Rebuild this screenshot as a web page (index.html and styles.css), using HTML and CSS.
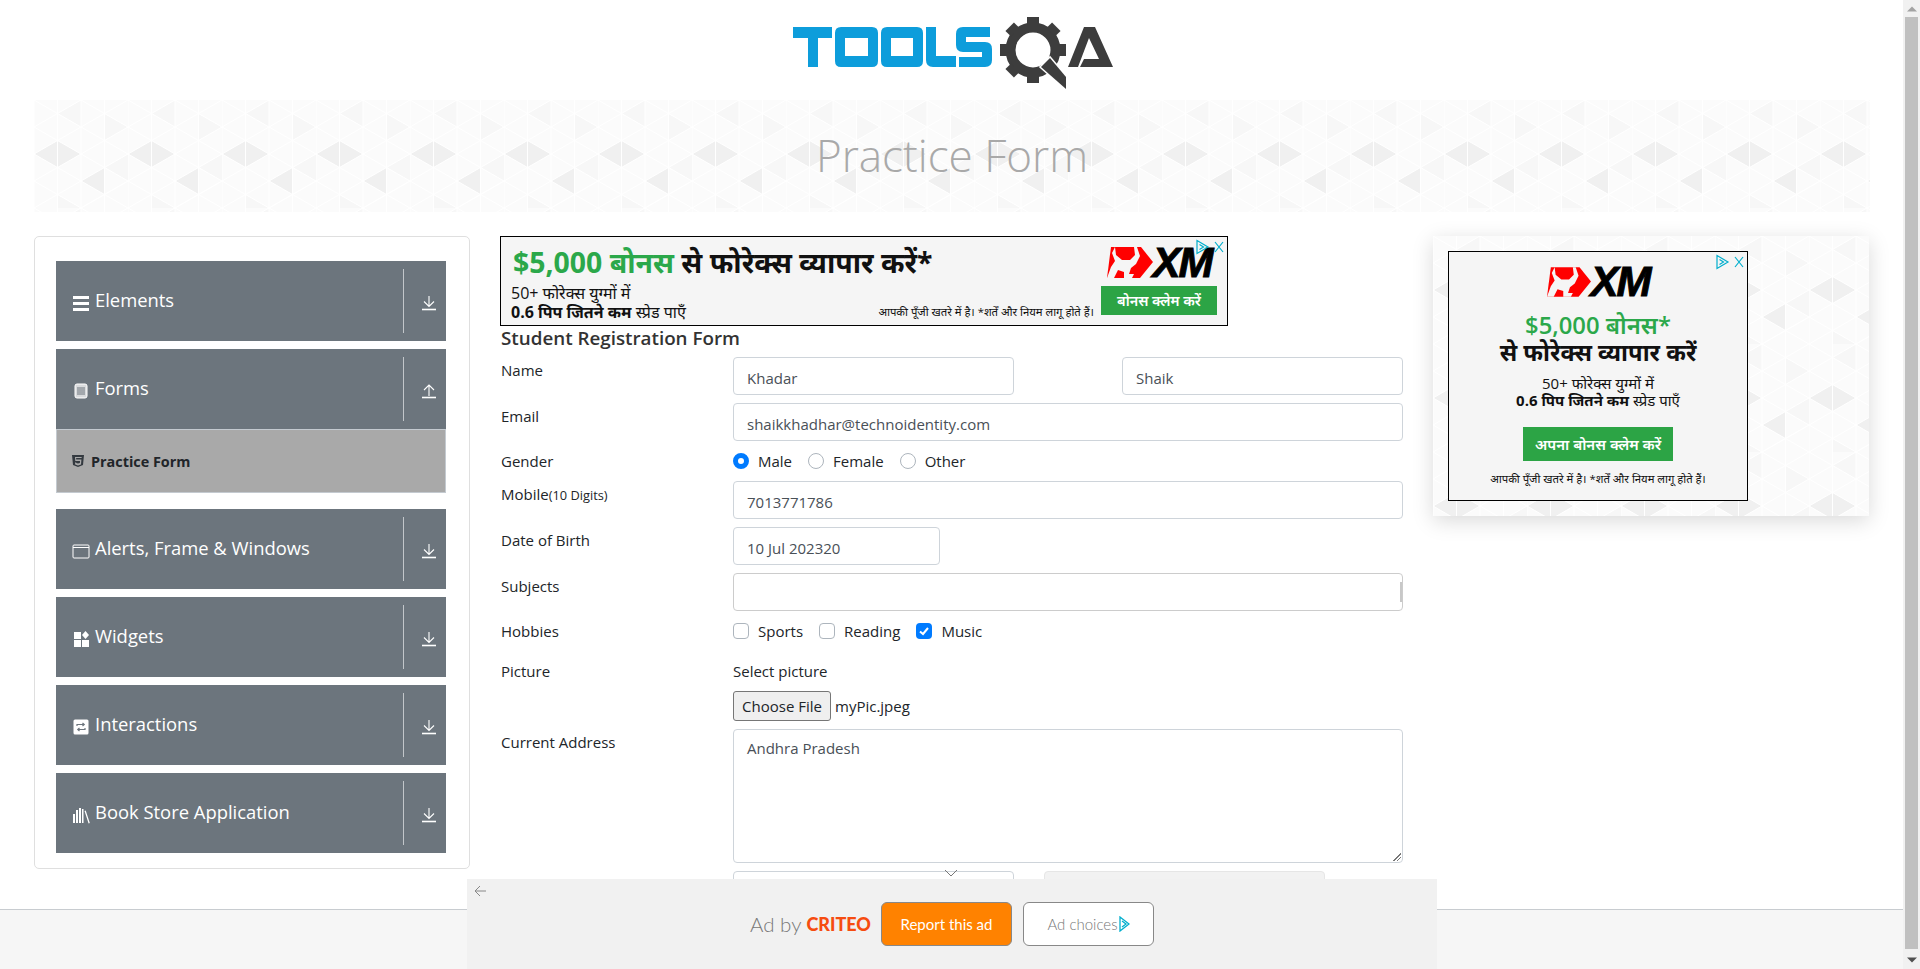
FILE: index.html
```html
<!DOCTYPE html>
<html>
<head>
    <meta charset="utf-8">
    <title>ToolsQA</title>
    <link rel="stylesheet" href="styles.css">
</head>
<body>
    <div class="page">
        <header class="logo-bar">
            <svg class="logo" viewBox="0 0 320 74" width="320" height="74">
                <g fill="#0d9ddb">
                    <path d="M0 10H39V21H25V50H15V21H0z"/>
                    <path fill-rule="evenodd" d="M48 10H79Q85 10 85 16V44Q85 50 79 50H48Q42 50 42 44V16Q42 10 48 10zM52 21V39H75V21z"/>
                    <path fill-rule="evenodd" d="M94 10H124Q130 10 130 16V44Q130 50 124 50H94Q88 50 88 44V16Q88 10 94 10zM98 21V39H120V21z"/>
                    <path d="M133 10H143V39H163V50H140Q133 50 133 43z"/>
                    <path d="M170 10H197V20H173V25H192Q199 25 199 32V43Q199 50 192 50H166V40H189V35H170Q163 35 163 28V17Q163 10 170 10z"/>
                </g>
                <g fill="#3d3d3d">
                    <circle cx="240" cy="33" r="22.500" fill="none" stroke="#3d3d3d" stroke-width="10"/>
                    <path d="M234 0h12v8h-12z"/>
                    <path d="M234 0h12v8h-12z" transform="rotate(45 240 33)"/>
                    <path d="M234 0h12v8h-12z" transform="rotate(90 240 33)"/>
                    <path d="M234 0h12v8h-12z" transform="rotate(180 240 33)"/>
                    <path d="M234 0h12v8h-12z" transform="rotate(225 240 33)"/>
                    <path d="M234 0h12v8h-12z" transform="rotate(270 240 33)"/>
                    <path d="M234 0h12v8h-12z" transform="rotate(315 240 33)"/>
                    <path d="M248 50L257 41L273 60V72z" stroke="#fff" stroke-width="3" paint-order="stroke"/>
                    <path d="M275 50L291 10H302L320 50H287L291 42H306L296 21L285 50z"/>
                </g>
            </svg>
        </header>

        <div class="banner"><h1>Practice Form</h1></div>

        <div class="content">
            <aside class="side-card">
                <div class="menu-item">
                    <svg class="menu-icon" viewBox="0 0 18 18"><path d="M1 2h16v3H1zM1 8h16v3H1zM1 14h16v3H1z" fill="#fff"/></svg>
                    <span class="menu-label">Elements</span>
                    <svg class="menu-arrow" viewBox="0 0 16 16"><path d="M8 1v10M3 6.500l5 5 5-5" fill="none" stroke="#fff" stroke-width="1.100"/><path d="M1 14.500h14" stroke="#fff" stroke-width="1.600"/></svg>
                </div>
                <div class="menu-item">
                    <svg class="menu-icon" viewBox="0 0 18 18"><rect x="3" y="2" width="12" height="14" rx="2" fill="#d9dbdd" stroke="#fff"/><path d="M5 6h8M5 8h8M5 10h8M5 12h8" stroke="#6c757d"/></svg>
                    <span class="menu-label">Forms</span>
                    <svg class="menu-arrow" viewBox="0 0 16 16"><path d="M8 13V2M3 7l5-5 5 5" fill="none" stroke="#fff" stroke-width="1.100"/><path d="M1 14.500h14" stroke="#fff" stroke-width="1.600"/></svg>
                </div>
                <div class="sub-item">
                    <svg class="sub-icon" viewBox="0 0 14 14"><path fill-rule="evenodd" d="M1 1h12l-1 10-5 2-5-2zm3 2l.3 4H9l-.1 2L7 9.600 5.200 9V8.500H4l.2 2L7 11.500l3-1 .4-5H5.200L5.100 4H10.600L10.700 3z" fill="#343a40"/></svg>
                    <span>Practice Form</span>
                </div>
                <div class="menu-item">
                    <svg class="menu-icon" viewBox="0 0 18 18"><rect x="1" y="3" width="16" height="13" rx="1" fill="none" stroke="#fff"/><path d="M1 5.500h16" stroke="#fff"/></svg>
                    <span class="menu-label">Alerts, Frame &amp; Windows</span>
                    <svg class="menu-arrow" viewBox="0 0 16 16"><path d="M8 1v10M3 6.500l5 5 5-5" fill="none" stroke="#fff" stroke-width="1.100"/><path d="M1 14.500h14" stroke="#fff" stroke-width="1.600"/></svg>
                </div>
                <div class="menu-item">
                    <svg class="menu-icon" viewBox="0 0 18 18"><path d="M2 2h7v7H2zM2 10h7v7H2zM10 10h7v7h-7zM13.500 1l3.500 4-3.500 4L10 5z" fill="#fff"/></svg>
                    <span class="menu-label">Widgets</span>
                    <svg class="menu-arrow" viewBox="0 0 16 16"><path d="M8 1v10M3 6.500l5 5 5-5" fill="none" stroke="#fff" stroke-width="1.100"/><path d="M1 14.500h14" stroke="#fff" stroke-width="1.600"/></svg>
                </div>
                <div class="menu-item">
                    <svg class="menu-icon" viewBox="0 0 18 18"><rect x="1.500" y="1.500" width="15" height="15" rx="1.500" fill="#fff"/><path d="M5 8V6.500h7M10.500 5l1.700 1.500L10.500 8M13 10v1.500H6M7.500 13L5.800 11.500 7.500 10" fill="none" stroke="#6c757d" stroke-width="1.200"/></svg>
                    <span class="menu-label">Interactions</span>
                    <svg class="menu-arrow" viewBox="0 0 16 16"><path d="M8 1v10M3 6.500l5 5 5-5" fill="none" stroke="#fff" stroke-width="1.100"/><path d="M1 14.500h14" stroke="#fff" stroke-width="1.600"/></svg>
                </div>
                <div class="menu-item">
                    <svg class="menu-icon" viewBox="0 0 18 18"><path d="M1 8h2v9H1zM4 4h2v13H4zM7 2h2v15H7zM10 3h1.500v14H10zM12.500 5l1.200-.4L17.800 17l-1.200.4z" fill="#fff"/></svg>
                    <span class="menu-label">Book Store Application</span>
                    <svg class="menu-arrow" viewBox="0 0 16 16"><path d="M8 1v10M3 6.500l5 5 5-5" fill="none" stroke="#fff" stroke-width="1.100"/><path d="M1 14.500h14" stroke="#fff" stroke-width="1.600"/></svg>
                </div>
            </aside>

            <main class="form-col">
                <div class="ad-wide">
                    <div class="ad-wide-left">
                        <div class="ad-head"><span class="green">$5,000 बोनस</span> से फोरेक्स व्यापार करें*</div>
                        <div class="ad-sub">50+ फोरेक्स युग्मों में<br><b>0.6 पिप जितने कम</b> स्प्रेड पाएँ</div>
                    </div>
                    <div class="ad-risk">आपकी पूँजी खतरे में है। *शर्तें और नियम लागू होते हैं।</div>
                    <div class="ad-wide-right">
                        <div class="xm">
                            <svg viewBox="0 0 46 31" width="46" height="31"><path d="M4 0H34L46 15L33 31H0z" fill="#f00"/><path d="M8 0L9 8L15 13H23L28 8L27 0H30L33 9L29 17L24 21L22 27L27 27L25 31H17L17 25L11 23L7 31H0L4 20L8 14L5 6z" fill="#f5f5f5"/></svg>
                            <span class="xm-text">XM</span>
                        </div>
                        <div class="ad-btn">बोनस क्लेम करें</div>
                    </div>
                    <svg class="ad-choice" viewBox="0 0 30 16" width="30" height="16"><path d="M3 1.500L14 8 3 14.500zM5.500 5.500L9.500 8 5.500 10.500" fill="none" stroke="#00aecd" stroke-width="1.200"/><path d="M21 3l8 10M29 3l-8 10" stroke="#00aecd" stroke-width="1.200"/></svg>
                </div>

                <h5 class="form-title">Student Registration Form</h5>

                <form class="reg-form">
                    <div class="row">
                        <label class="col-label">Name</label>
                        <div class="name-fields">
                            <div class="input">Khadar</div>
                            <div class="input">Shaik</div>
                        </div>
                    </div>
                    <div class="row">
                        <label class="col-label">Email</label>
                        <div class="input grow">shaikkhadhar@technoidentity.com</div>
                    </div>
                    <div class="row row-inline">
                        <label class="col-label">Gender</label>
                        <div class="checks">
                            <span class="check"><i class="radio on"></i>Male</span>
                            <span class="check"><i class="radio"></i>Female</span>
                            <span class="check"><i class="radio"></i>Other</span>
                        </div>
                    </div>
                    <div class="row">
                        <label class="col-label">Mobile<small>(10 Digits)</small></label>
                        <div class="input grow">7013771786</div>
                    </div>
                    <div class="row">
                        <label class="col-label">Date of Birth</label>
                        <div class="input dob">10 Jul 202320</div>
                    </div>
                    <div class="row">
                        <label class="col-label">Subjects</label>
                        <div class="input grow subjects"></div>
                    </div>
                    <div class="row row-inline row-hobbies">
                        <label class="col-label">Hobbies</label>
                        <div class="checks">
                            <span class="check"><i class="box"></i>Sports</span>
                            <span class="check"><i class="box"></i>Reading</span>
                            <span class="check"><i class="box on"><svg viewBox="0 0 16 16"><path d="M4 8.500l3 2.500 5-6" fill="none" stroke="#fff" stroke-width="2"/></svg></i>Music</span>
                        </div>
                    </div>
                    <div class="row row-inline-top">
                        <label class="col-label">Picture</label>
                        <div class="picture">
                            <div>Select picture</div>
                            <div class="file-line"><span class="file-btn">Choose File</span><span>myPic.jpeg</span></div>
                        </div>
                    </div>
                    <div class="row">
                        <label class="col-label">Current Address</label>
                        <div class="input grow textarea">Andhra Pradesh</div>
                    </div>
                    <div class="row">
                        <label class="col-label">State and City</label>
                        <div class="state-fields">
                            <div class="input"></div>
                            <div class="input disabled"></div>
                        </div>
                    </div>
                </form>
            </main>

            <aside class="ad-side">
                <div class="ad-tall">
                    <svg class="ad-choice" viewBox="0 0 30 16" width="30" height="16"><path d="M3 1.500L14 8 3 14.500zM5.500 5.500L9.500 8 5.500 10.500" fill="none" stroke="#00aecd" stroke-width="1.200"/><path d="M21 3l8 10M29 3l-8 10" stroke="#00aecd" stroke-width="1.200"/></svg>
                    <div class="xm">
                        <svg viewBox="0 0 46 31" width="44" height="30"><path d="M4 0H34L46 15L33 31H0z" fill="#f00"/><path d="M8 0L9 8L15 13H23L28 8L27 0H30L33 9L29 17L24 21L22 27L27 27L25 31H17L17 25L11 23L7 31H0L4 20L8 14L5 6z" fill="#f5f5f5"/></svg>
                        <span class="xm-text">XM</span>
                    </div>
                    <div class="tall-green">$5,000 बोनस*</div>
                    <div class="tall-black">से फोरेक्स व्यापार करें</div>
                    <div class="tall-sub">50+ फोरेक्स युग्मों में<br><b>0.6 पिप जितने कम</b> स्प्रेड पाएँ</div>
                    <div class="tall-btn">अपना बोनस क्लेम करें</div>
                    <div class="tall-risk">आपकी पूँजी खतरे में है। *शर्तें और नियम लागू होते हैं।</div>
                </div>
            </aside>
        </div>
    </div>

    <footer class="page-footer"></footer>

    <div class="criteo">
        <svg class="criteo-chevron" viewBox="0 0 14 8" width="14" height="8"><path d="M1 1l6 6 6-6" fill="none" stroke="#777" stroke-width="1"/></svg>
        <svg class="criteo-back" viewBox="0 0 12 12" width="12" height="12"><path d="M12 6H1M6 1L1 6l5 5" fill="none" stroke="#888" stroke-width="1"/></svg>
        <span class="ad-by">Ad by</span>
        <span class="criteo-name">CRITEO</span>
        <span class="report-btn">Report this ad</span>
        <span class="choices-btn">Ad choices<svg viewBox="0 0 12 16" width="12" height="16"><path d="M2 1l9 7-9 7zM4 5l4 3-4 3" fill="none" stroke="#00aecd" stroke-width="1.300"/></svg></span>
    </div>

    <div class="scrollbar">
        <svg viewBox="0 0 10 6" width="10" height="6"><path d="M0 5.500L5 .5l5 5z" fill="#a3a3a3"/></svg>
        <div class="thumb"></div>
        <svg viewBox="0 0 10 6" width="10" height="6"><path d="M0 .5L5 5.500 10 .5z" fill="#505050"/></svg>
    </div>
</body>
</html>
```

FILE: styles.css
```css
html, body {
    margin: 0;
    padding: 0;
    height: 969px;
    overflow: hidden;
}

body {
    font-family: "Open Sans", "Noto Sans", sans-serif;
    font-size: 15px;
    color: #212529;
    background-color: #fff;
}

.page {
    width: 1903px;
    height: 909px;
    padding: 0 33px 0 34px;
    box-sizing: border-box;
    overflow: hidden;
}

.logo-bar {
    height: 100px;
    display: flex;
    justify-content: center;
    padding: 17px 0 0 0;
    box-sizing: border-box;
}

.logo {
    margin-left: 2px;
}

.banner, .ad-side {
    background-color: #fbfbfb;
    background-image: url("data:image/svg+xml,%3Csvg xmlns='http://www.w3.org/2000/svg' width='94' height='108'%3E%3Cg fill='%23f0f0f0'%3E%3Cpath d='M23.500 40.500V67.500L47 54zM23.500 40.500V67.500L0 54zM70.500 67.500V94.500L47 81z'/%3E%3C/g%3E%3Cg fill='%23f7f7f7'%3E%3Cpath d='M70.500 13.500V40.500L94 27zM47 0V27L23.500 13.500zM23.500 94.500V121.500L47 108zM94 54V81L70.500 67.500z'/%3E%3C/g%3E%3Cpath d='M0 -54L94 0M0 -27L94 27M0 0L94 54M0 27L94 81M0 54L94 108M0 81L94 135M0 108L94 162M0 54L94 0M0 81L94 27M0 108L94 54M0 135L94 81M0 162L94 108M0 27L47 0M47 108L94 81M0 0V108M23.500 0V108M47 0V108M70.500 0V108' stroke='%23fff' stroke-width='1' fill='none'/%3E%3C/svg%3E");
}

.banner {
    height: 112px;
    padding-bottom: 2px;
    box-sizing: border-box;
    display: flex;
    align-items: center;
    justify-content: center;
}

.banner h1 {
    margin: 0;
    font-size: 44px;
    font-weight: 300;
    color: #a9a9a9;
}

.content {
    display: flex;
    margin-top: 24px;
}

.side-card {
    width: 436px;
    height: 633px;
    box-sizing: border-box;
    flex-shrink: 0;
    padding: 24px 23px 0 21px;
    border: 1px solid #dfdfdf;
    border-radius: 5px;
    background-color: #fff;
}

.menu-item {
    height: 80px;
    margin-bottom: 8px;
    padding-left: 16px;
    display: flex;
    align-items: center;
    position: relative;
    background-color: #6c757d;
    color: #fff;
    font-size: 18.400px;
}

.menu-icon {
    width: 18px;
    height: 18px;
    margin-right: 5px;
    margin-top: 4px;
}

.menu-label {
    flex: 1;
    margin-top: -4px;
}

.menu-arrow {
    width: 16px;
    height: 16px;
    margin: 4px 9px 0 18px;
}

.menu-item::after {
    content: "";
    position: absolute;
    left: 347px;
    top: 8px;
    bottom: 8px;
    width: 1px;
    background-color: #c2c6ca;
}

.sub-item {
    height: 64px;
    margin: -8px 0 16px;
    padding-left: 14px;
    display: flex;
    align-items: center;
    gap: 6px;
    box-sizing: border-box;
    border: 1px solid #c4cad0;
    background-color: #a9a9a9;
    font-weight: 700;
    font-size: 14.400px;
}

.sub-icon {
    width: 14px;
    height: 14px;
}

.form-col {
    width: 903px;
    margin-left: 30px;
    flex-shrink: 0;
}

.ad-wide {
    width: 728px;
    height: 90px;
    box-sizing: border-box;
    border: 1px solid #000;
    background-color: #f5f5f5;
    position: relative;
    overflow: hidden;
    color: #111;
}

.ad-wide-left {
    padding: 5px 0 0 12px;
}

.ad-head {
    font-size: 28.400px;
    font-weight: 700;
    white-space: nowrap;
    line-height: 40px;
}

.green {
    color: #2ba84a;
}

.ad-sub {
    margin: 2px 0 0 -2px;
    font-size: 16px;
    line-height: 19px;
    white-space: nowrap;
}

.ad-risk {
    position: absolute;
    right: 133px;
    bottom: 6px;
    font-size: 11.300px;
    white-space: nowrap;
}

.ad-wide-right {
    position: absolute;
    right: 10px;
    top: 10px;
    width: 116px;
}

.ad-btn {
    margin-top: 8px;
    height: 29px;
    line-height: 29px;
    text-align: center;
    background-color: #2ca445;
    color: #fff;
    font-size: 14.300px;
    font-weight: 600;
}

.xm {
    display: flex;
    justify-content: center;
    align-items: center;
}

.xm-text {
    font-family: "Liberation Sans", sans-serif;
    font-weight: 700;
    font-style: italic;
    font-size: 42px;
    line-height: 30px;
    letter-spacing: -2px;
    -webkit-text-stroke: 1px #000;
    color: #000;
}

.ad-choice {
    position: absolute;
    top: 2px;
    right: 3px;
}

.form-title {
    margin: 0;
    padding-left: 1px;
    font-size: 18.800px;
    line-height: 25px;
    font-weight: 600;
    color: #333;
}

.reg-form {
    margin-top: 6px;
}

.row {
    display: flex;
    margin-bottom: 8px;
}

.row-inline {
    height: 24px;
    align-items: center;
}

.row-hobbies {
    margin-bottom: 16px;
}

.col-label {
    width: 233px;
    box-sizing: border-box;
    flex-shrink: 0;
    padding: 2px 0 0 1px;
    line-height: 22px;
}

.row-inline .col-label, .row-inline-top .col-label {
    padding-top: 0;
    line-height: 24px;
}

.col-label small {
    font-size: 12.800px;
}

.input {
    height: 38px;
    box-sizing: border-box;
    padding: 2px 12px 0 13px;
    line-height: 36px;
    color: #495057;
    border: 1px solid #ced4da;
    border-radius: 4px;
    background-color: #fff;
}

.grow {
    flex: 1;
}

.name-fields {
    flex: 1;
    display: flex;
    justify-content: space-between;
}

.name-fields .input {
    width: 281px;
}

.dob {
    width: 207px;
}

.subjects {
    border-color: #ccc;
    position: relative;
}

.subjects::after {
    content: "";
    position: absolute;
    right: 0;
    top: 8px;
    width: 2px;
    height: 20px;
    background-color: #c8c8c8;
}

.textarea {
    height: 134px;
    padding-top: 0;
    position: relative;
}

.textarea::after {
    content: "";
    position: absolute;
    right: 1px;
    bottom: 1px;
    width: 8px;
    height: 8px;
    background: linear-gradient(135deg, transparent 50%, #777 50%, #777 58%, transparent 58%, transparent 72%, #777 72%, #777 80%, transparent 80%);
}

.state-fields {
    flex: 1;
    display: flex;
    gap: 30px;
}

.state-fields .input {
    width: 281px;
}

.disabled {
    background-color: #f2f2f2;
    border-color: #e6e6e6;
}

.checks {
    display: flex;
    height: 24px;
    align-items: center;
    gap: 16px;
}

.check {
    display: flex;
    align-items: center;
    gap: 9px;
}

.radio, .box {
    width: 16px;
    height: 16px;
    box-sizing: border-box;
    display: block;
    border: 1px solid #adb5bd;
    background-color: #fff;
}

.radio {
    border-radius: 50%;
}

.radio.on {
    border: 5px solid #007bff;
}

.box {
    border-radius: 4px;
}

.box.on {
    border: none;
    background-color: #007bff;
}

.box svg {
    display: block;
}

.picture {
    line-height: 24px;
}

.file-line {
    margin-top: 8px;
    display: flex;
    align-items: center;
    gap: 4px;
}

.file-btn {
    width: 98px;
    height: 30px;
    line-height: 28px;
    box-sizing: border-box;
    text-align: center;
    border: 1px solid #767676;
    border-radius: 3px;
    background-color: #efefef;
}

.ad-side {
    width: 436px;
    height: 280px;
    margin-left: 30px;
    flex-shrink: 0;
    box-sizing: border-box;
    padding: 15px;
    box-shadow: 0 5px 20px rgba(0, 0, 0, 0.15);
}

.ad-tall {
    width: 300px;
    height: 250px;
    box-sizing: border-box;
    border: 1px solid #000;
    background-color: #f5f5f5;
    position: relative;
    text-align: center;
    padding-top: 15px;
    color: #111;
}

.tall-green {
    margin-top: 15px;
    font-size: 23.800px;
    line-height: 27px;
    font-weight: 600;
    color: #2ba84a;
}

.tall-black {
    font-size: 23.700px;
    line-height: 27px;
    font-weight: 700;
}

.tall-sub {
    margin-top: 9px;
    font-size: 15px;
    line-height: 17px;
}

.tall-btn {
    width: 150px;
    height: 34px;
    line-height: 34px;
    margin: 18px auto 0;
    background-color: #2ca445;
    color: #fff;
    font-size: 15px;
    font-weight: 600;
}

.tall-risk {
    margin-top: 10px;
    font-size: 11.300px;
    line-height: 16px;
}

.page-footer {
    height: 60px;
    width: 1903px;
    border-top: 1px solid #c8ccd0;
    box-sizing: border-box;
    background-color: #f6f6f6;
}

.criteo {
    position: absolute;
    left: 467px;
    top: 879px;
    width: 970px;
    height: 90px;
    background-color: #f1f1f1;
    display: flex;
    align-items: center;
    justify-content: center;
    box-sizing: border-box;
    font-family: "Lato", sans-serif;
    font-weight: 300;
    color: #777;
}

.criteo-chevron {
    position: absolute;
    left: 477px;
    top: -10px;
}

.criteo-back {
    position: absolute;
    left: 7px;
    top: 6px;
}

.ad-by {
    font-size: 20.500px;
}

.criteo-name {
    margin: 0 10px 0 5px;
    font-size: 18px;
    font-weight: 900;
    color: #f64c10;
}

.report-btn, .choices-btn {
    width: 131px;
    height: 44px;
    box-sizing: border-box;
    display: flex;
    align-items: center;
    justify-content: center;
    border: 1px solid #888;
    border-radius: 6px;
    font-size: 15px;
}

.report-btn {
    background-color: #ff8200;
    color: #fff;
    font-weight: 400;
}

.choices-btn {
    margin-left: 11px;
    background-color: #fff;
}

.scrollbar {
    position: absolute;
    top: 0;
    right: 0;
    bottom: 0;
    width: 17px;
    background-color: #f1f1f1;
    display: flex;
    flex-direction: column;
    align-items: center;
    justify-content: space-between;
    padding: 6px 0;
    box-sizing: border-box;
}

.thumb {
    flex: 1;
    width: 13px;
    margin: 5px 0 8px;
    background-color: #c0c0c0;
}
```
